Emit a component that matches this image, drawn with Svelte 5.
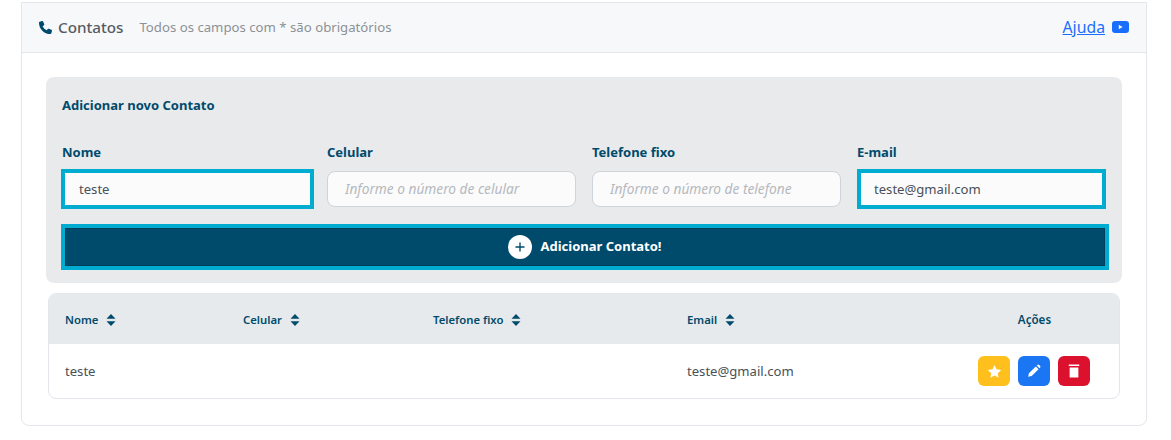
<script>
  let contact = { nome: 'teste', email: 'teste@gmail.com' };
  const cols = ['Nome', 'Celular', 'Telefone fixo', 'Email'];
</script>

<div class="card">
  <header class="top">
    <div class="title">
      <svg class="phone" viewBox="0 0 512 512"><path d="M164.900 24.600c-7.700-18.600-28-28.500-47.400-23.200l-88 24C12.100 30.200 0 46 0 64C0 311.400 200.600 512 448 512c18 0 33.800-12.100 38.600-29.500l24-88c5.300-19.400-4.600-39.700-23.200-47.400l-96-40c-16.300-6.800-35.200-2.100-46.300 11.600L304.700 368C234.300 334.700 177.300 277.700 144 207.300L193.300 167c13.700-11.200 18.400-30 11.600-46.300l-40-96z"/></svg>
      <span class="name">Contatos</span>
      <span class="hint">Todos os campos com * são obrigatórios</span>
    </div>
    <div class="help">
      <a href="#ajuda">Ajuda</a>
      <svg class="yt" viewBox="0 0 17 12"><rect width="17" height="12" rx="3" fill="#1a6efc"/><path d="M6.800 3.800 10.600 6 6.800 8.200z" fill="#fff"/></svg>
    </div>
  </header>

  <div class="body">
    <form class="panel" on:submit|preventDefault>
      <h2>Adicionar novo Contato</h2>
      <div class="fields">
        <label class="field">
          <span>Nome</span>
          <input class="ring first" value={contact.nome} placeholder="Informe o nome" />
        </label>
        <label class="field">
          <span>Celular</span>
          <input placeholder="Informe o número de celular" />
        </label>
        <label class="field">
          <span>Telefone fixo</span>
          <input placeholder="Informe o número de telefone" />
        </label>
        <label class="field">
          <span>E-mail</span>
          <input class="ring last" value={contact.email} placeholder="Informe o e-mail" />
        </label>
      </div>
      <button class="add" type="submit">
        <svg viewBox="0 0 24 24"><circle cx="12" cy="12" r="12" fill="#fff"/><path d="M12 7.500v9M7.500 12h9" stroke="#004b6b" stroke-width="1.400" fill="none"/></svg>
        <span>Adicionar Contato!</span>
      </button>
    </form>

    <div class="tablewrap">
      <table>
        <thead>
          <tr>
            {#each cols as c}
              <th>
                {c}
                <svg class="sort" viewBox="0 0 10 12"><path d="M5 0 9.500 4.800H.5zM5 12 .5 7.200h9z"/></svg>
              </th>
            {/each}
            <th class="acts">Ações</th>
          </tr>
        </thead>
        <tbody>
          <tr>
            <td>{contact.nome}</td>
            <td></td>
            <td></td>
            <td>{contact.email}</td>
            <td>
              <div class="btns">
                <button class="yellow" aria-label="Favorito">
                  <svg class="star" viewBox="0 0 24 24"><path d="M12 1.500l3.200 6.900 7.500 1-5.500 5.200 1.400 7.400L12 18.400 5.400 22l1.400-7.400L1.300 9.400l7.500-1z"/></svg>
                </button>
                <button class="blue" aria-label="Editar">
                  <svg viewBox="0 0 24 24"><path d="M2 22l1.300-6L15.100 4.200l4.700 4.700L8 20.700zM16.700 2.600l1-1a2.200 2.200 0 0 1 3.100 0l1.600 1.600a2.200 2.200 0 0 1 0 3.100l-1 1z"/></svg>
                </button>
                <button class="red" aria-label="Excluir">
                  <svg viewBox="0 0 20 24"><path d="M1 1h18v2.500H1zM2.500 6h15v17h-15z"/></svg>
                </button>
              </div>
            </td>
          </tr>
        </tbody>
      </table>
    </div>
  </div>
</div>

<style>
  :global(body) {
    background: #fff;
    font-family: "Noto Sans", "Open Sans", sans-serif;
    color: #495057;
  }
  .card {
    box-sizing: border-box;
    width: 1126px;
    height: 424px;
    margin: 2px 0 0 21px;
    border: 1px solid #e3e6ea;
    border-radius: 0 0 8px 8px;
    background: #fff;
  }
  .top {
    display: flex;
    justify-content: space-between;
    align-items: center;
    height: 49px;
    padding: 0 17px;
    background: #f7f8fa;
    border-bottom: 1px solid #e3e6ea;
  }
  .title, .help {
    display: flex;
    align-items: center;
  }
  .phone {
    width: 13px;
    height: 13px;
    fill: #004b6b;
    margin-right: 6px;
  }
  .name {
    font-size: 15.2px;
    line-height: 18px;
    margin-bottom: 2px;
    font-weight: 500;
    color: #555b61;
  }
  .hint {
    font-size: 13.2px;
    line-height: 18px;
    margin-bottom: 2px;
    color: #8c9196;
    margin-left: 16px;
  }
  .help a {
    font-size: 15.8px;
    line-height: 20px;
    margin-bottom: 1px;
    color: #1a6efc;
  }
  .yt {
    width: 17px;
    height: 12px;
    margin-left: 7px;
    margin-bottom: 1px;
  }
  .body {
    padding: 24px 24px 0;
  }
  .panel {
    height: 206px;
    background: #e9eaec;
    border-radius: 8px;
    padding: 0 16px;
    box-sizing: border-box;
  }
  h2 {
    margin: 0;
    padding-top: 19px;
    height: 44px;
    box-sizing: border-box;
    font-size: 13px;
    line-height: 18px;
    font-weight: 700;
    color: #004b6b;
  }
  .fields {
    display: grid;
    grid-template-columns: repeat(4, 249px);
    gap: 16px;
    padding-top: 22px;
  }
  .field span {
    display: block;
    font-size: 13px;
    line-height: 18px;
    font-weight: 700;
    color: #004b6b;
    margin-bottom: 10px;
  }
  input {
    display: block;
    box-sizing: border-box;
    width: 249px;
    height: 36px;
    padding: 0 17px;
    border: 1px solid #ced4da;
    border-radius: 8px;
    background: #fbfbfc;
    font: 13.1px "Noto Sans", sans-serif;
    color: #495057;
  }
  input::placeholder {
    font-size: 13.7px;
    font-style: italic;
    color: #b5b9bd;
  }
  .ring {
    border-color: #00acd0;
    border-radius: 0;
    outline: 4px solid #00acd0;
    outline-offset: -2px;
  }
  .ring.first {
    margin-left: 1px;
    padding-left: 15px;
  }
  .ring.last {
    width: 245px;
    margin-left: 2px;
    padding-left: 14px;
  }
  .add {
    display: flex;
    align-items: center;
    justify-content: center;
    gap: 8px;
    box-sizing: border-box;
    width: 1048px;
    height: 46px;
    margin: 17px 0 0 -1px;
    border: 4px solid #00acd0;
    background: #004b6b;
    box-shadow: inset 0 0 0 1px #003f5c;
    color: #fff;
    font: 700 13px "Noto Sans", sans-serif;
  }
  .add span {
    margin-top: -2px;
  }
  .add svg {
    width: 24px;
    height: 24px;
  }
  .tablewrap {
    box-sizing: border-box;
    width: 1072px;
    height: 106px;
    margin: 10px 0 0 2px;
    border: 1px solid #e3e6ea;
    border-radius: 8px;
    overflow: hidden;
  }
  table {
    width: 100%;
    table-layout: fixed;
    border-collapse: collapse;
  }
  th, td {
    box-sizing: border-box;
  }
  th {
    height: 50px;
    padding: 0 0 0 16px;
    background: #e7eaed;
    text-align: left;
    font-size: 11.3px;
    font-weight: 600;
    color: #004b6b;
  }
  th:nth-child(1), td:nth-child(1) { width: 178px; }
  th:nth-child(2), td:nth-child(2) { width: 190px; }
  th:nth-child(3), td:nth-child(3) { width: 254px; }
  th:nth-child(4), td:nth-child(4) { width: 271px; }
  th.acts {
    padding: 0 0 0 8px;
    text-align: center;
    font-size: 11.6px;
    font-weight: 600;
  }
  .sort {
    width: 10px;
    height: 12px;
    margin-left: 5px;
    vertical-align: -2px;
    fill: #004b6b;
  }
  td {
    height: 54px;
    padding: 0 0 0 16px;
    font-size: 13.1px;
    color: #495057;
  }
  .btns {
    display: flex;
    gap: 8px;
    margin-left: 20px;
  }
  .btns button {
    display: flex;
    align-items: center;
    justify-content: center;
    width: 32px;
    height: 30px;
    padding: 0;
    border: none;
    border-radius: 6px;
  }
  .btns svg {
    width: 14px;
    height: 14px;
    fill: #fff;
  }
  .btns svg.star {
    width: 15px;
    height: 15px;
  }
  .yellow { background: #ffc01e; }
  .blue { background: #1a76f2; }
  .red { background: #dc112e; }
</style>
